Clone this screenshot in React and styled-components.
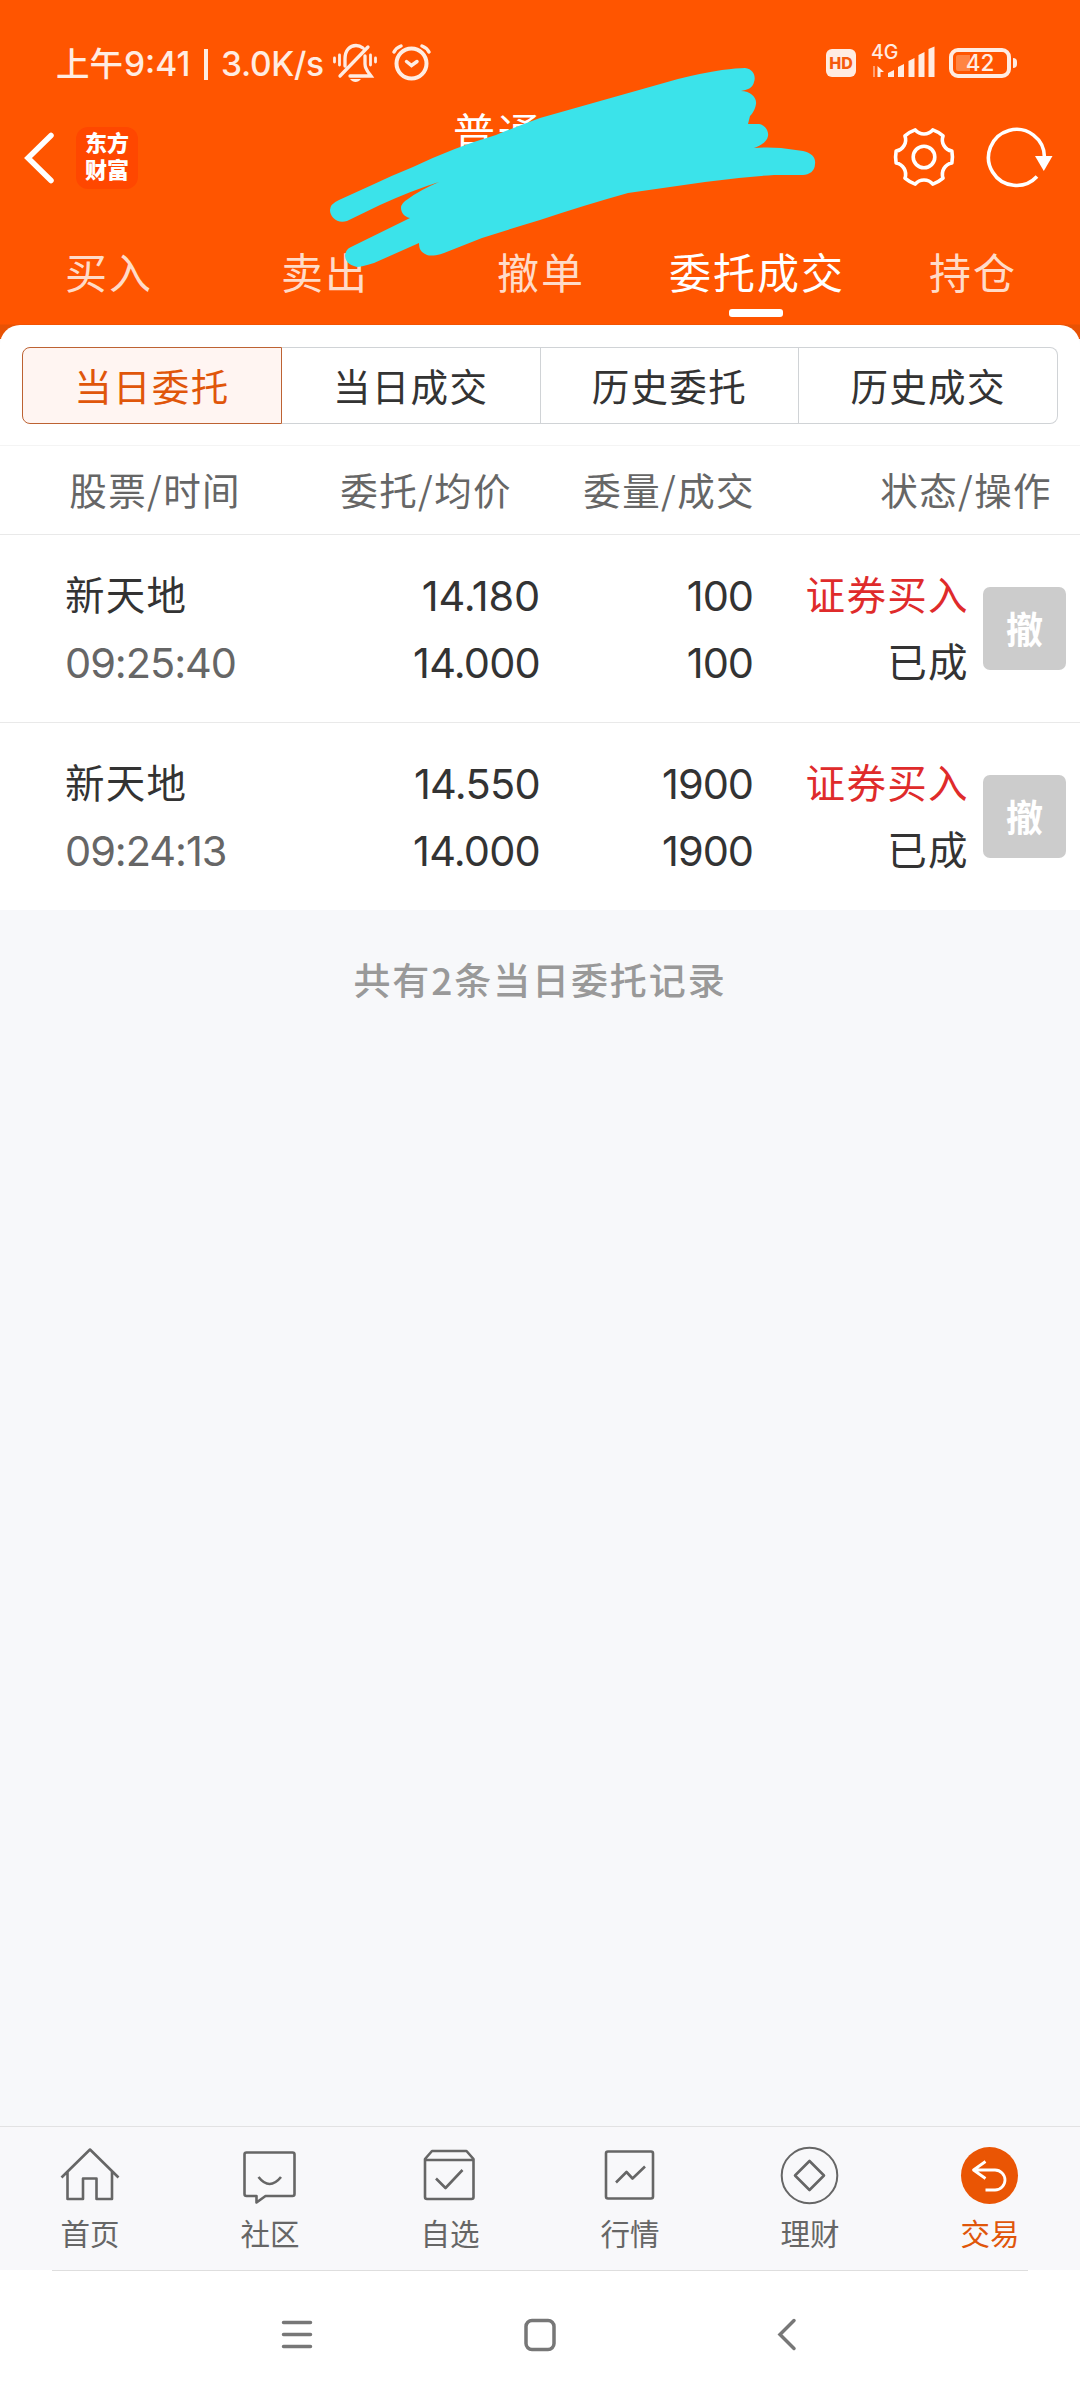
import React from "react";
import styled, { createGlobalStyle } from "styled-components";

const latin = 'Inter, "Noto Sans CJK SC", sans-serif';
const cjk = '"Noto Sans CJK SC", "Noto Sans", sans-serif';

const GlobalStyle = createGlobalStyle`
  * { box-sizing: border-box; }
  body { margin: 0; background: #f7f8fa; font-family: ${cjk}; }
  svg { display: block; flex: none; overflow: visible; }
`;

const Screen = styled.div`
  width: 1080px;
  height: 2400px;
  display: flex;
  flex-direction: column;
  background: #f7f8fa;
  overflow: hidden;
`;

const Header = styled.header`
  position: relative;
  height: 339px;
  flex: none;
  display: flex;
  flex-direction: column;
  background: linear-gradient(#ff5500 324px, #e85204 325px);
`;

const StatusBar = styled.div`
  height: 126px;
  padding: 0 63px 0 56px;
  display: flex;
  justify-content: space-between;
  align-items: center;
  color: #ffece2;
`;

const StatusGroup = styled.div`
  display: flex;
  align-items: center;
`;

const Clock = styled.div`
  display: flex;
  align-items: center;
  height: 40px;
  padding-top: 2px;
  font: 500 33.5px/40px ${latin};
  white-space: pre;
`;

const ClockPart = styled.span`
  width: ${(p) => p.$w}px;
  letter-spacing: ${(p) => p.$ls || 0}px;
`;

const Bar = styled.span`
  width: 4px;
  height: 31px;
  margin-right: 13px;
  background: #ffece2;
`;

const HdBadge = styled.div`
  width: 30px;
  height: 28px;
  border-radius: 6px;
  background: #ffece2;
  color: #f55a0c;
  font: 800 16px/28px ${latin};
  text-align: center;
`;

const Signal = styled.div`
  width: 68px;
  height: 34px;
  margin: -4px 13px 0 12px;
  display: flex;
`;

const SignalText = styled.text`
  font: 500 19.5px ${latin};
  fill: #ffece2;
`;

const Battery = styled.div`
  width: 62px;
  height: 30px;
  padding: 3px;
  border: 4px solid #ffece2;
  border-radius: 9px;
  background: linear-gradient(90deg, #ff8442 14px, transparent 14px) content-box;
  display: flex;
  align-items: center;
  justify-content: center;
  font: 500 22.5px/22px ${latin};
`;

const BatteryTip = styled.div`
  width: 4px;
  height: 10px;
  margin-left: 2px;
  border-radius: 0 4px 4px 0;
  background: #ffece2;
`;

const TitleBar = styled.div`
  height: 100px;
  padding: 0 27px 36px 24px;
  display: flex;
  align-items: center;
`;

const Logo = styled.div`
  width: 62px;
  height: 62px;
  margin-left: 21px;
  padding: 1px 0 0 9px;
  border-radius: 12px;
  background: #ff4700;
  color: #fff;
  font: 900 22px/27px "Noto Sans CJK SC", sans-serif;
`;

const Title = styled.h1`
  margin: 0 0 54px 315px;
  width: 176px;
  font: 400 42px/50px ${cjk};
  letter-spacing: 3px;
  color: #fff;
`;

const Actions = styled.div`
  margin-left: auto;
  display: flex;
  gap: 33px;
`;

const Tabs = styled.nav`
  display: grid;
  grid-template-columns: repeat(5, 216px);
  height: 99px;
`;

const Tab = styled.div`
  display: flex;
  flex-direction: column;
  align-items: center;
  padding-top: 15px;
  font: 400 42px/60px ${cjk};
  letter-spacing: 2px;
  text-indent: 2px;
  color: ${(p) => (p.$active ? "#fff" : "#ffdbc8")};
  &::after {
    content: "";
    width: 54px;
    height: 8px;
    margin-top: 8px;
    border-radius: 3px;
    background: ${(p) => (p.$active ? "#fff" : "transparent")};
  }
`;

const Scribble = styled.svg`
  position: absolute;
  left: 0;
  top: 0;
`;

const Sheet = styled.section`
  position: relative;
  margin-top: -14px;
  height: 121px;
  flex: none;
  padding: 22px 22px 0;
  border-radius: 20px 20px 0 0;
  border-bottom: 1px solid #f4f4f4;
  background: #fff;
`;

const Segmented = styled.div`
  display: flex;
  height: 77px;
`;

const Segment = styled.div`
  flex: 1;
  display: flex;
  align-items: center;
  justify-content: center;
  border: 1px solid ${(p) => (p.$active ? "#bd6232" : "#d0d3d6")};
  border-left-width: ${(p) => (p.$active ? 1 : 0)}px;
  background: ${(p) => (p.$active ? "#fff5f2" : "#fff")};
  color: ${(p) => (p.$active ? "#e0560a" : "#333")};
  font: 400 37.5px/50px ${cjk};
  letter-spacing: 1.3px;
  padding-bottom: 1px;
  &:first-child { border-radius: 8px 0 0 8px; }
  &:last-child { border-radius: 0 8px 8px 0; }
`;

const ColumnHeads = styled.div`
  display: grid;
  grid-template-columns: 241px 271px 243px 297px;
  height: 89px;
  flex: none;
  padding-bottom: 2px;
  align-items: center;
  text-align: right;
  background: #fff;
  border-bottom: 1px solid #e9e9e9;
  font: 400 37.5px/50px ${cjk};
  letter-spacing: 1.4px;
  color: #666;
`;

const Order = styled.div`
  display: grid;
  grid-template-columns: 215px 260px 213px 214px 83px;
  height: ${(p) => (p.$last ? 187 : 188)}px;
  flex: none;
  padding: 27px 14px 0 65px;
  background: #fff;
  border-bottom: ${(p) => (p.$last ? 0 : 1)}px solid #e9e9e9;
`;

const Cell = styled.div`
  display: flex;
  flex-direction: column;
  align-items: ${(p) => (p.$left ? "flex-start" : "flex-end")};
  white-space: nowrap;
`;

const Words = styled.div`
  height: 67px;
  font: 400 39.5px/62px ${cjk};
  letter-spacing: 1.3px;
  margin-right: -1.8px;
  color: ${(p) => p.$color || "#333"};
`;

const Figures = styled.div`
  height: 67px;
  font: 400 41.5px/68px ${latin};
  letter-spacing: ${(p) => p.$ls}px;
  color: ${(p) => p.$color || "#333"};
`;

const CancelButton = styled.button`
  width: 83px;
  height: 83px;
  margin: 25px 0 0 16px;
  padding: 0 0 1px;
  border: 0;
  border-radius: 7px;
  background: #ccc;
  color: #fff;
  font: 700 37px/50px ${cjk};
`;

const Summary = styled.div`
  flex: 1;
  padding-top: 44px;
  text-align: center;
  font: 500 37px/50px ${cjk};
  letter-spacing: 1.9px;
  color: #999;
`;

const BottomNav = styled.nav`
  height: 144px;
  flex: none;
  display: grid;
  grid-template-columns: repeat(6, 180px);
  border-top: 1px solid #e2e2e3;
  background: #f8f8fa;
`;

const NavItem = styled.div`
  display: flex;
  flex-direction: column;
  align-items: center;
  padding-top: 20px;
  font: 400 29.5px/40px ${cjk};
  color: ${(p) => (p.$active ? "#e0560a" : "#666")};
  svg { margin: 0 1px 8px 0; }
`;

const SystemNav = styled.div`
  height: 130px;
  flex: none;
  background: #fff;
`;

const SystemRule = styled.div`
  height: 1px;
  margin: 0 52px;
  background: #dedede;
`;

const SystemKeys = styled.div`
  display: grid;
  grid-template-columns: 243px 248px 34px;
  padding: 47px 0 0 280px;
`;

const polar = (deg, r) => {
  const a = (deg * Math.PI) / 180;
  return `${(r * Math.cos(a)).toFixed(2)} ${(r * Math.sin(a)).toFixed(2)}`;
};
const gearPath =
  [0, 60, 120, 180, 240, 300]
    .map((d, i) => `${i ? "L" : "M"}${polar(d - 12, 28.5)} Q${polar(d, 29)} ${polar(d + 12, 28.5)} A11.5 11.5 0 0 0 ${polar(d + 48, 28.5)}`)
    .join(" ") + "Z";

const MutedBell = () => (
  <svg width="46" height="40" viewBox="332 44 46 40" fill="none" stroke="#ffece2" strokeWidth="3.3" strokeLinecap="round">
    <path d="M340 77L368 48M345 67V60C345 51 350 46.5 356 46.5C359 46.5 361 47.5 363 49M365 57V65C365 70 368 73 371 77H350" />
    <path d="M350 80H361C358 84 353 84 350 80Z" fill="#ffece2" stroke="none" />
    <path d="M334.5 59V63M339.5 56V66M370.5 56V66M375.5 59V63" strokeWidth="2.8" />
  </svg>
);

const Alarm = () => (
  <svg width="40" height="40" viewBox="392 44 40 40" fill="none" stroke="#ffece2" strokeWidth="4" strokeLinecap="round">
    <circle cx="411.5" cy="64.5" r="15" />
    <path d="M394 53Q396 49 401 47M429 53Q427 49 422 47M406.5 62.5L411.5 66.5L417 62.5" strokeWidth="3.5" />
  </svg>
);

const NavIcon = ({ name }) => {
  const shapes = {
    home: (
      <path d="M1.5 22.5L30 -5.5L58.5 22.5M7.5 16.5V44H23V23.5H36.5V44H52V16.5" transform="translate(-1 8)" />
    ),
    chat: (
      <>
        <path d="M5.5 5.5H51.5Q53.5 5.5 53.5 7.5V47Q53.5 49 51.5 49H24.5L15.5 55.5V49H5.5Q3.5 49 3.5 47V7.5Q3.5 5.5 5.5 5.5Z" />
        <path d="M17.5 30Q28.5 44 40 30" />
      </>
    ),
    box: (
      <>
        <path d="M4 12L11 4H45.5L52.5 12V50Q52.5 52 50.5 52H6Q4 52 4 50ZM4 13H52.5" />
        <path d="M15 31.5L24.5 41L41.5 23" />
      </>
    ),
    chart: (
      <>
        <rect x="5" y="4.5" width="47" height="47" rx="2" />
        <path d="M15 35.5L25.5 25L31.5 31.5L44 19.5" />
      </>
    ),
    finance: (
      <>
        <circle cx="28.5" cy="28.5" r="27.8" strokeWidth="2" />
        <path d="M28.5 14L43 28.5L28.5 43L14 28.5Z" />
      </>
    ),
    trade: (
      <>
        <circle cx="28.5" cy="28.5" r="28.5" fill="#ea5504" stroke="none" />
        <path d="M24.5 14.5L12.5 23L24.5 31.5M12.5 23H34A9.7 9.7 0 0 1 34 43H24.5" stroke="#fff" strokeWidth="2.8" />
      </>
    ),
  };
  return (
    <svg width="57" height="57" viewBox="0 0 57 57" fill="none" stroke="#666" strokeWidth="2.6" strokeLinejoin="round">
      {shapes[name]}
    </svg>
  );
};

const orders = [
  { name: "新天地", time: "09:25:40", price: "14.180", priceGap: -0.2, avg: "14.000", qty: "100", done: "100" },
  { name: "新天地", time: "09:24:13", price: "14.550", priceGap: -0.7, avg: "14.000", qty: "1900", done: "1900" },
];

const navItems = [
  ["home", "首页"],
  ["chat", "社区"],
  ["box", "自选"],
  ["chart", "行情"],
  ["finance", "理财"],
  ["trade", "交易"],
];

export default function App() {
  return (
    <Screen>
      <GlobalStyle />
      <Header>
        <StatusBar>
          <StatusGroup>
            <Clock>
              <ClockPart $w={68}>上午</ClockPart>
              <ClockPart $w={80}>9:41</ClockPart>
              <Bar />
              <ClockPart $w={111} $ls={-0.3}>3.0K/s</ClockPart>
            </Clock>
            <MutedBell />
            <svg width="14" height="1" />
            <Alarm />
          </StatusGroup>
          <StatusGroup>
            <HdBadge>HD</HdBadge>
            <Signal>
              <svg width="68" height="34" viewBox="868 45 68 34" fill="#ffece2">
                <SignalText x="871" y="59.5">4G</SignalText>
                <path d="M868 73L873 78V67H875V78H873Z" opacity=".5" />
                <path d="M877.5 78V67L884 73H880.5V78Z" />
                <path d="M888 78V74L894 71V78ZM898 78V68L904 65V78ZM908.5 78V62L914.5 59V78ZM918.5 78V56L924.5 53V78ZM928.5 78V50L934.5 47.5V78Z" />
              </svg>
            </Signal>
            <Battery>42</Battery>
            <BatteryTip />
          </StatusGroup>
        </StatusBar>
        <TitleBar>
          <svg width="31" height="52" viewBox="24 132 31 52" fill="none" stroke="#fff" strokeWidth="5.5" strokeLinecap="round">
            <path d="M51 135.5L28 158L51 180.5" />
          </svg>
          <Logo>
            东方
            <br />
            财富
          </Logo>
          <Title>普通</Title>
          <Actions>
            <svg width="60" height="60" viewBox="-30 -29 60 60" fill="none" stroke="#fff" strokeWidth="3.6" strokeLinejoin="round">
              <path d={gearPath} />
              <circle r="10.8" />
            </svg>
            <svg width="66" height="60" viewBox="986.5 127.5 66 60" fill="none" stroke="#fff" strokeWidth="3.6">
              <path d="M1044 157A28 28 0 1 0 1036.5 176" />
              <path d="M1034.5 155.5H1052L1043.3 170.5Z" fill="#fff" stroke="none" />
            </svg>
          </Actions>
        </TitleBar>
        <Tabs>
          <Tab>买入</Tab>
          <Tab>卖出</Tab>
          <Tab>撤单</Tab>
          <Tab $active>委托成交</Tab>
          <Tab>持仓</Tab>
        </Tabs>
        <Scribble width="1080" height="325" viewBox="0 0 1080 325">
          <path
            fill="#3be3ea"
            d="M339 200L372 185Q393 175 413 167Q455 147 496 135Q518 126 540 118L678 79Q702 73 722 70Q737 68 745 68C754 69 756 77 754 82C753 88 747 90 741 91C751 91 757 98 756 104C755 110 752 114 750 116L748 124H759C765 125 769 131 768 136C767 142 760 146 754 148Q767 147 781 148L803 151C812 153 816 158 815 164C815 171 809 175 803 175H774Q740 177 705 182L628 193Q585 205 540 220Q510 229 482 238L444 253C436 256 430 256 427 255C420 252 419 248 419 243L374 263Q361 267 357 267C348 265 345 260 345 255Q346 249 351 247L410 218C404 217 401 212 401 208Q401 203 408 199Q420 190 439 182Q413 190 380 205L347 221C337 224 330 217 330 210Q330 204 339 200Z"
          />
        </Scribble>
      </Header>
      <Sheet>
        <Segmented>
          <Segment $active>当日委托</Segment>
          <Segment>当日成交</Segment>
          <Segment>历史委托</Segment>
          <Segment>历史成交</Segment>
        </Segmented>
      </Sheet>
      <ColumnHeads>
        <span>股票/时间</span>
        <span>委托/均价</span>
        <span>委量/成交</span>
        <span>状态/操作</span>
      </ColumnHeads>
      {orders.map((o, i) => (
        <Order key={o.time} $last={i === orders.length - 1}>
          <Cell $left>
            <Words>{o.name}</Words>
            <Figures $color="#666" $ls={-1.05}>{o.time}</Figures>
          </Cell>
          <Cell>
            <Figures $ls={o.priceGap}>{o.price}</Figures>
            <Figures $ls={-0.8}>{o.avg}</Figures>
          </Cell>
          <Cell>
            <Figures $ls={-1}>{o.qty}</Figures>
            <Figures $ls={-1}>{o.done}</Figures>
          </Cell>
          <Cell>
            <Words $color="#df2b2b">证券买入</Words>
            <Words>已成</Words>
          </Cell>
          <CancelButton>撤</CancelButton>
        </Order>
      ))}
      <Summary>共有2条当日委托记录</Summary>
      <BottomNav>
        {navItems.map(([icon, label]) => (
          <NavItem key={icon} $active={icon === "trade"}>
            <NavIcon name={icon} />
            {label}
          </NavItem>
        ))}
      </BottomNav>
      <SystemNav>
        <SystemRule />
        <SystemKeys>
          <svg width="34" height="34" viewBox="280 2318 34 34" stroke="#777" strokeWidth="3.5" strokeLinecap="round">
            <path d="M283.5 2322.5H310.5M283.5 2334.5H310.5M283.5 2346.5H310.5" />
          </svg>
          <svg width="34" height="34" viewBox="523 2318 34 34" fill="none" stroke="#777" strokeWidth="3.5">
            <rect x="526" y="2320.5" width="28" height="29" rx="6" />
          </svg>
          <svg width="34" height="34" viewBox="771 2318 34 34" fill="none" stroke="#777" strokeWidth="3.5" strokeLinecap="round">
            <path d="M794 2320.5L780 2334.5L794 2348.5" />
          </svg>
        </SystemKeys>
      </SystemNav>
    </Screen>
  );
}
